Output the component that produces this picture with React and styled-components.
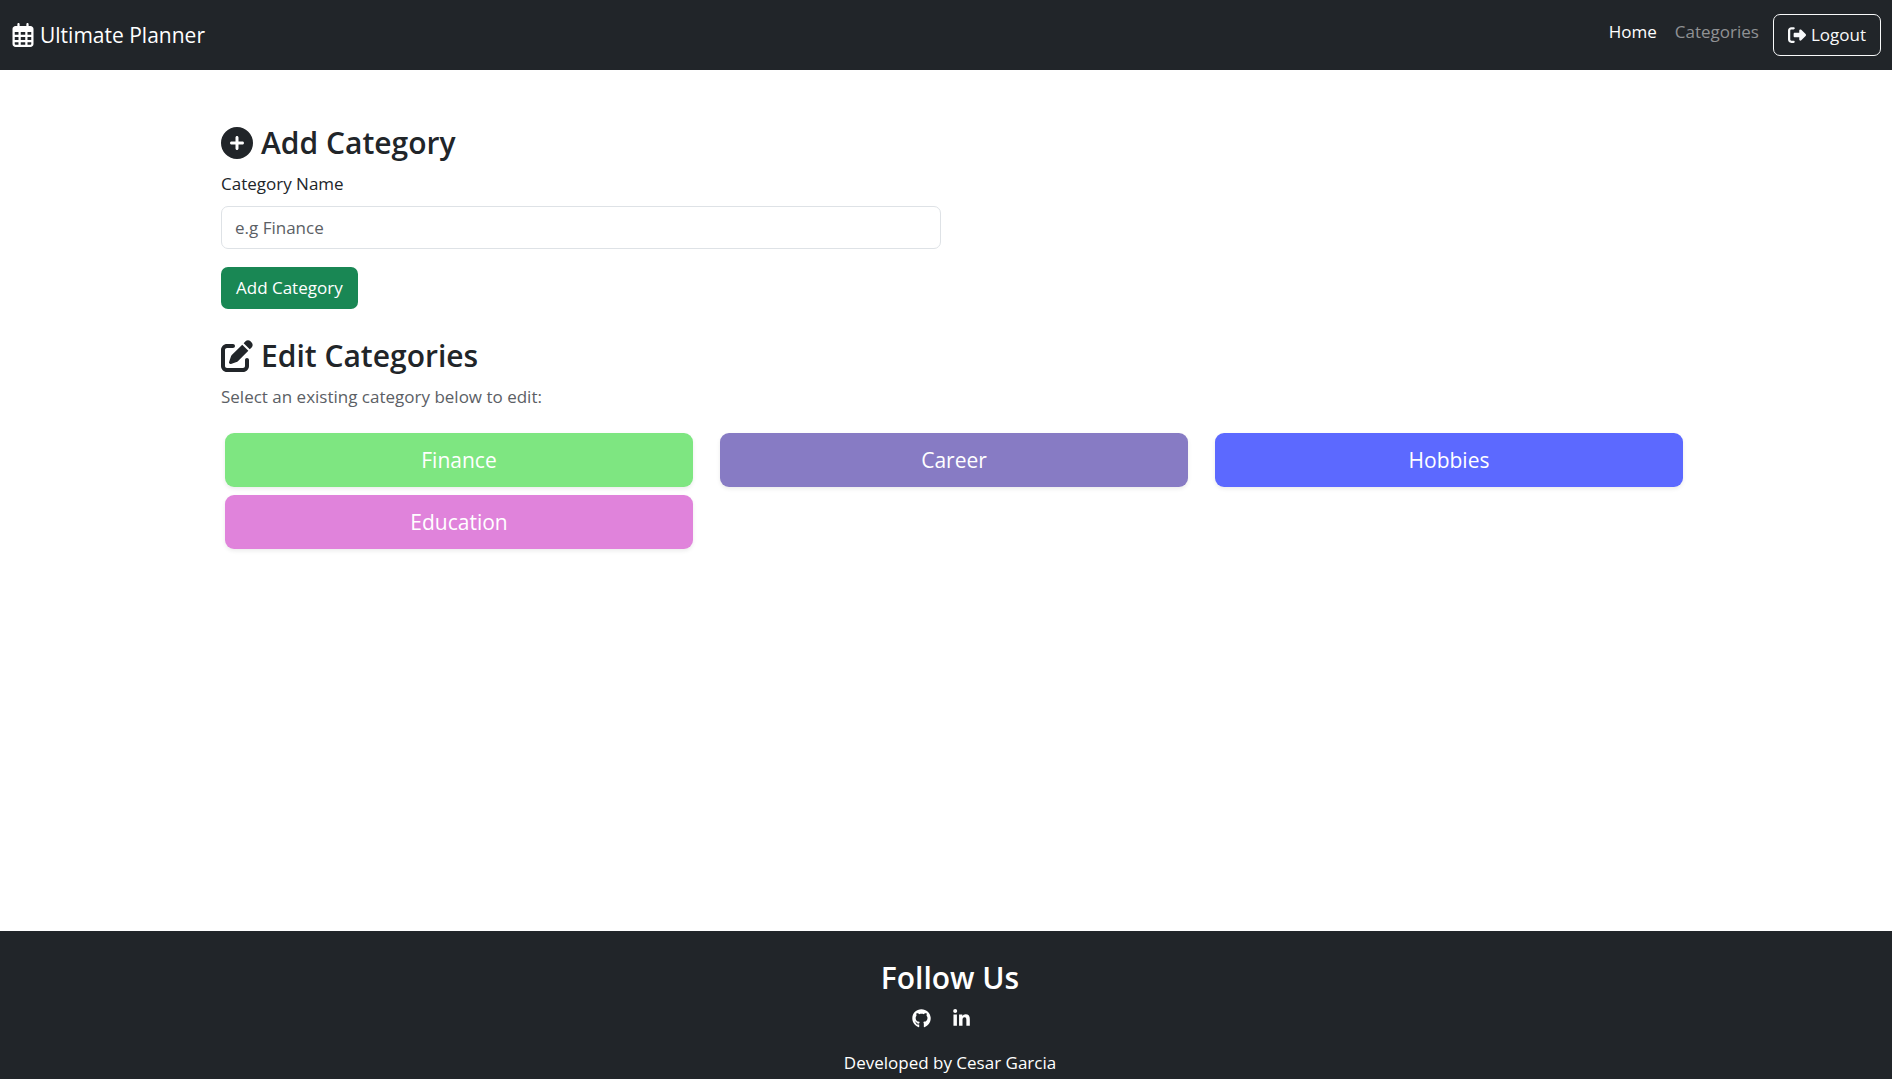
import React from "react";
import styled, { createGlobalStyle } from "styled-components";
import { FaRegCalendarDays, FaCirclePlus, FaPenToSquare, FaRightFromBracket, FaGithub, FaLinkedinIn } from "react-icons/fa6";

const GlobalStyle = createGlobalStyle`
  *, *::before, *::after { box-sizing: border-box; }
  body {
    margin: 0;
    background: #fff;
    color: #212529;
    font: 400 17px/26px "Open Sans", "Noto Sans", sans-serif;
  }
  button, input { font: inherit; }
  a { color: inherit; text-decoration: none; }
`;

const Page = styled.div`
  display: flex;
  flex-direction: column;
  min-height: 100vh;
`;

const Navbar = styled.header`
  display: flex;
  align-items: center;
  justify-content: space-between;
  padding: 14px 11px;
  background: #212529;
  color: #fff;
`;

const Brand = styled.a`
  display: flex;
  align-items: center;
  gap: 5px;
  font-size: 21px;
  line-height: 32px;
`;

const Nav = styled.nav`
  display: flex;
  align-items: flex-start;
`;

const NavLink = styled.a`
  padding: 5px 9px;
  color: ${(p) => (p.$active ? "#fff" : "#909294")};
`;

const LogoutButton = styled.button`
  display: flex;
  align-items: center;
  gap: 5px;
  margin-left: 5px;
  padding: 7px 14px;
  border: 1px solid #f8f9fa;
  border-radius: 7px;
  background: transparent;
  color: #f8f9fa;
`;

const Main = styled.main`
  flex: 1;
  padding: 52px 0 24px 12px;
`;

const Container = styled.div`
  max-width: 1462px;
  margin: 0 auto;
`;

const Heading = styled.h2`
  display: flex;
  align-items: center;
  gap: 8px;
  margin: 0 0 7px;
  font-size: 30px;
  line-height: 42px;
  font-weight: 600;
`;

const Form = styled.form`
  display: flex;
  flex-direction: column;
  align-items: flex-start;
  margin-bottom: 26px;
`;

const Label = styled.label`
  margin-bottom: 9px;
`;

const TextInput = styled.input`
  width: 100%;
  max-width: 720px;
  margin-bottom: 18px;
  padding: 7px 13px;
  height: 43px;
  border: 1px solid #dee2e6;
  border-radius: 7px;
  background: #fff;
  color: #212529;
  &::placeholder { color: #5b6065; opacity: 1; }
`;

const SubmitButton = styled.button`
  padding: 8px 15px;
  border: 0;
  border-radius: 7px;
  background: #198754;
  color: #fff;
`;

const Hint = styled.p`
  margin: 0 0 23px;
  color: #5b6065;
`;

const CategoryGrid = styled.div`
  display: grid;
  grid-template-columns: repeat(3, 1fr);
  gap: 8px 27px;
  padding-left: 4px;
`;

const CategoryButton = styled.button`
  padding: 10px 18px;
  border: 0;
  border-radius: 9px;
  background: ${(p) => p.$color};
  color: #fff;
  font-size: 21px;
  line-height: 34px;
  box-shadow: 0 2px 4px rgba(0, 0, 0, 0.08);
`;

const Footer = styled.footer`
  display: flex;
  flex-direction: column;
  align-items: center;
  padding: 26px 0 3px 8px;
  background: #212529;
  color: #fff;
`;

const FooterTitle = styled.h2`
  margin: 0 0 10px;
  font-size: 30px;
  line-height: 42px;
  font-weight: 600;
`;

const SocialLinks = styled.div`
  display: flex;
  gap: 21px;
  margin-bottom: 22px;
  padding-right: 18px;
`;

const SocialLink = styled.a`
  display: flex;
`;

const Credit = styled.p`
  margin: 0;
`;

const categories = [
  { name: "Finance", color: "#7ee681" },
  { name: "Career", color: "#877bc4" },
  { name: "Hobbies", color: "#5c69ff" },
  { name: "Education", color: "#e083db" },
];

export default function App() {
  return (
    <Page>
      <GlobalStyle />
      <Navbar>
        <Brand href="#home">
          <FaRegCalendarDays size={24} />
          Ultimate Planner
        </Brand>
        <Nav>
          <NavLink href="#home" $active>Home</NavLink>
          <NavLink href="#categories">Categories</NavLink>
          <LogoutButton type="button">
            <FaRightFromBracket size={18} />
            Logout
          </LogoutButton>
        </Nav>
      </Navbar>
      <Main>
        <Container>
          <Heading><FaCirclePlus size={32} />Add Category</Heading>
          <Form onSubmit={(e) => e.preventDefault()}>
            <Label htmlFor="category-name">Category Name</Label>
            <TextInput id="category-name" type="text" placeholder="e.g Finance" />
            <SubmitButton type="submit">Add Category</SubmitButton>
          </Form>
          <Heading><FaPenToSquare size={32} />Edit Categories</Heading>
          <Hint>Select an existing category below to edit:</Hint>
          <CategoryGrid>
            {categories.map((c) => (
              <CategoryButton key={c.name} type="button" $color={c.color}>{c.name}</CategoryButton>
            ))}
          </CategoryGrid>
        </Container>
      </Main>
      <Footer>
        <FooterTitle>Follow Us</FooterTitle>
        <SocialLinks>
          <SocialLink href="#github" aria-label="GitHub"><FaGithub size={19} /></SocialLink>
          <SocialLink href="#linkedin" aria-label="LinkedIn"><FaLinkedinIn size={19} /></SocialLink>
        </SocialLinks>
        <Credit>Developed by Cesar Garcia</Credit>
      </Footer>
    </Page>
  );
}
